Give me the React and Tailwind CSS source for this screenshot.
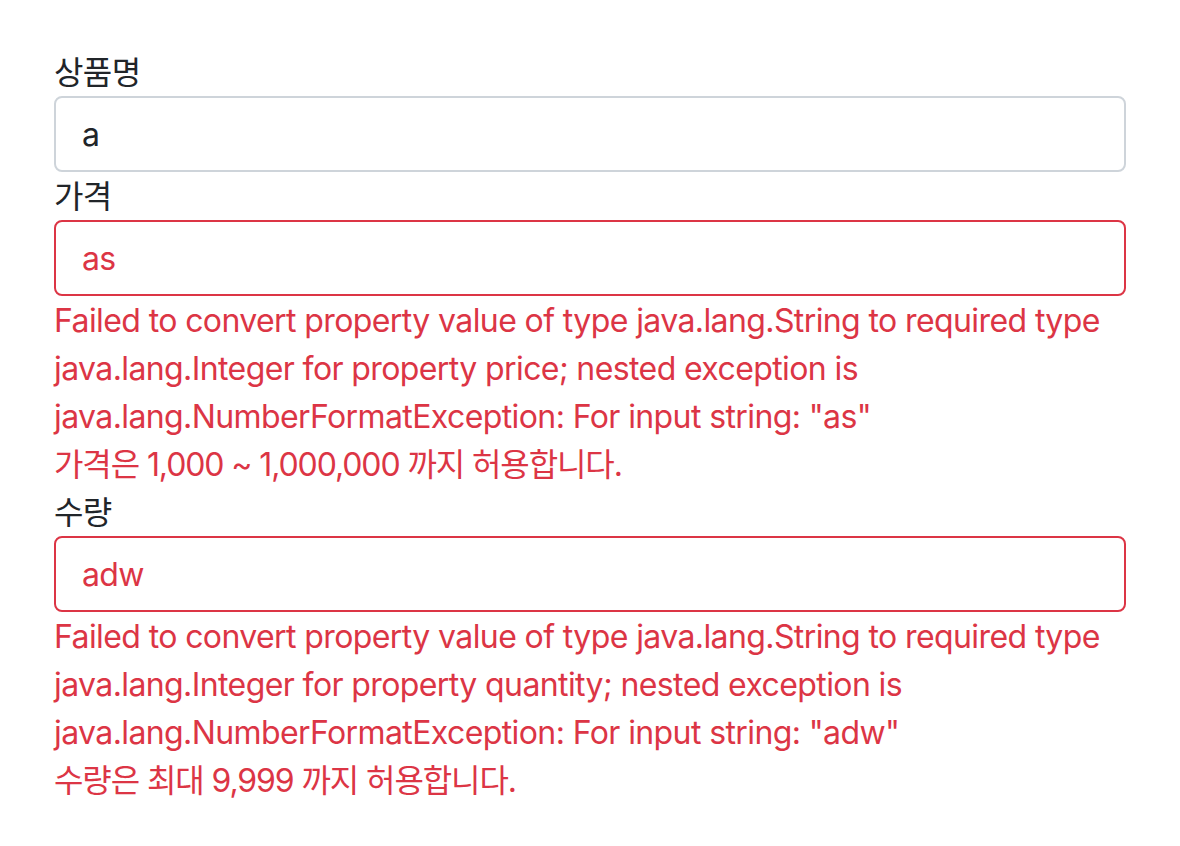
import React from "react";

const font = { fontFamily: '"Inter", "Noto Sans CJK KR", sans-serif' };

function Field({ label, value, invalid, errors, rule }) {
  return (
    <div>
      <label className="block text-[32px] leading-[48px] text-[#212529] pt-[1px] -mb-[1px]">{label}</label>
      <input
        readOnly
        value={value}
        className={`block w-full h-[76px] px-[26px] text-[32px] leading-[48px] tracking-[-0.6px] rounded-[8px] border-2 bg-white outline-none ${
          invalid ? "border-[#dc3545] text-[#dc3545]" : "border-[#ced4da] text-[#212529]"
        }`}
        style={font}
      />
      {errors && (
        <div className="text-[32px] leading-[48px] text-[#dc3545] pt-[1px] -mb-[1px]">
          <div>{errors}</div>
          <div className="tracking-[-1.1px]">{rule}</div>
        </div>
      )}
    </div>
  );
}

export default function App() {
  return (
    <div className="min-h-[846px] bg-white pt-[48px] px-[54px] tracking-[-0.6px]" style={font}>
      <Field label="상품명" value="a" />
      <Field
        label="가격"
        value="as"
        invalid
        errors='Failed to convert property value of type java.lang.String to required type java.lang.Integer for property price; nested exception is java.lang.NumberFormatException: For input string: "as"'
        rule="가격은 1,000 ~ 1,000,000 까지 허용합니다."
      />
      <Field
        label="수량"
        value="adw"
        invalid
        errors='Failed to convert property value of type java.lang.String to required type java.lang.Integer for property quantity; nested exception is java.lang.NumberFormatException: For input string: "adw"'
        rule="수량은 최대 9,999 까지 허용합니다."
      />
    </div>
  );
}
